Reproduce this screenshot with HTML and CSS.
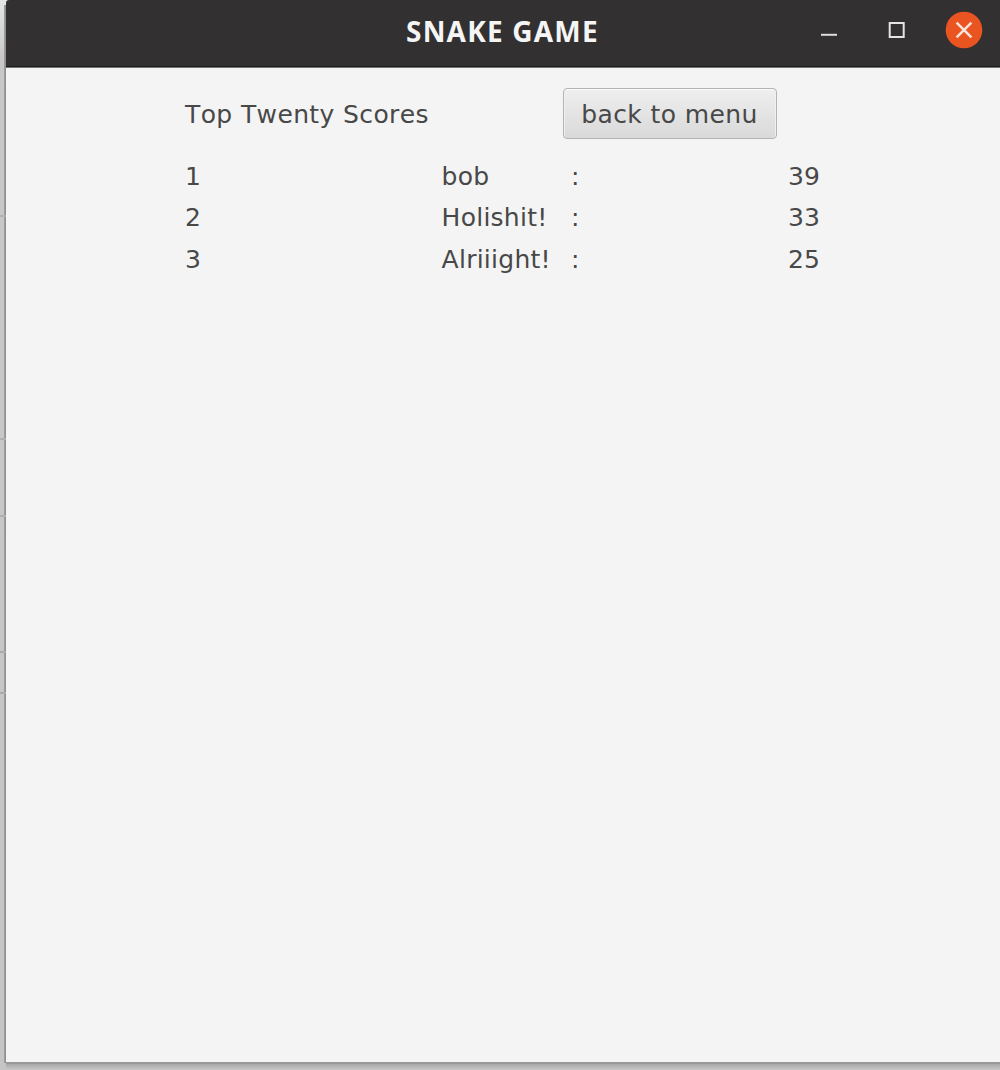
FILE: index.html
```html
<!DOCTYPE html>
<html lang="en">
<head>
<meta charset="utf-8">
<title>SNAKE GAME</title>
<link rel="stylesheet" href="styles.css">
</head>
<body>
<div class="desktop">
  <div class="window">
    <header class="titlebar">
      <h1 class="title">SNAKE GAME</h1>
      <div class="controls">
        <svg class="control" viewBox="0 0 38 38" aria-label="Minimize"><path d="M11 23.8h16" stroke="#ddd" stroke-width="2"/></svg>
        <svg class="control" viewBox="0 0 38 38" aria-label="Maximize"><rect x="11.7" y="12" width="14" height="14" fill="none" stroke="#e4e4e4" stroke-width="2"/></svg>
        <svg class="control" viewBox="0 0 38 38" aria-label="Close"><circle cx="19" cy="19" r="18.3" fill="#e95420"/><path d="M11.6 11.6l14.8 14.8M26.4 11.6L11.6 26.4" stroke="#fbe3da" stroke-width="2.5"/></svg>
      </div>
    </header>
    <main class="content">
      <div class="heading">
        <span class="label">Top Twenty Scores</span>
        <button class="back">back to menu</button>
      </div>
      <div class="scores">
        <span>1</span><span class="name">bob</span><span>:</span><span>39</span>
        <span>2</span><span class="name">Holishit!</span><span>:</span><span>33</span>
        <span>3</span><span class="name">Alriiight!</span><span>:</span><span>25</span>
      </div>
    </main>
  </div>
</div>
</body>
</html>
```
FILE: styles.css
```css
* { box-sizing: border-box; }
body { margin: 0; overflow: hidden; }
.desktop {
  width: 1000px;
  height: 1070px;
  padding-left: 6px;
  background:
    linear-gradient(#b0b0b0, #b0b0b0) 0 215px / 6px 2px no-repeat,
    linear-gradient(#b0b0b0, #b0b0b0) 0 438px / 6px 2px no-repeat,
    linear-gradient(#b0b0b0, #b0b0b0) 0 515px / 6px 2px no-repeat,
    linear-gradient(#a5acb0, #a5acb0) 0 651px / 6px 2px no-repeat,
    linear-gradient(#a5acb0, #a5acb0) 0 692px / 6px 2px no-repeat,
    linear-gradient(90deg, transparent 4px, #a0a0a0 4px, #8c8c8c 6px, transparent 6px) 0 5px / 6px 1058px no-repeat,
    linear-gradient(#a8a8a8, #c8c8c8) 6px 1064px / 100% 6px no-repeat,
    linear-gradient(#e4e7e8, #c8c8c8 60px, #c5c5c5);
}
.window {
  height: 1064px;
  background: #f4f4f4;
  border-bottom: 2px solid #999;
  border-radius: 3px 0 0 0;
  overflow: hidden;
}
.titlebar {
  display: grid;
  grid-template-columns: 1fr auto;
  height: 68px;
  padding: 0 17px 0 400px;
  background: #333031;
  border-bottom: 1px solid #777;
  box-shadow: inset 0 -1px #1e1b1b;
}
.title {
  margin: 0;
  font: bold 28px/62px "Noto Sans", sans-serif;
  letter-spacing: 1.2px;
  color: #f5f5f5;
  white-space: nowrap;
}
.controls { display: flex; gap: 29.5px; padding-top: 11px; }
.control { width: 38px; height: 38px; }
.content {
  padding: 20px 0 0 179px;
  font: 25px/42px "DejaVu Sans", sans-serif;
  color: #484848;
}
.heading { display: grid; grid-template-columns: 378px 214px; height: 67.8px; }
.label {
  line-height: 54px;
  letter-spacing: 0.38px;
  font-kerning: none;
  white-space: nowrap;
}
.back {
  height: 51px;
  padding: 2px 1px 0 0;
  border: 1px solid #b3b3b3;
  border-radius: 4px;
  background: linear-gradient(#efefef, #d9d9d9);
  box-shadow: inset 0 1px #fafafa, inset 1px 0 #f0f0f0, inset -1px 0 #f0f0f0;
  font: inherit;
  letter-spacing: 0.4px;
  color: #484848;
  white-space: nowrap;
}
.scores {
  display: grid;
  grid-template-columns: 256.6px 129.4px 217px 40px;
  grid-auto-rows: 41.7px;
}
.name { letter-spacing: 0.25px; }
```
